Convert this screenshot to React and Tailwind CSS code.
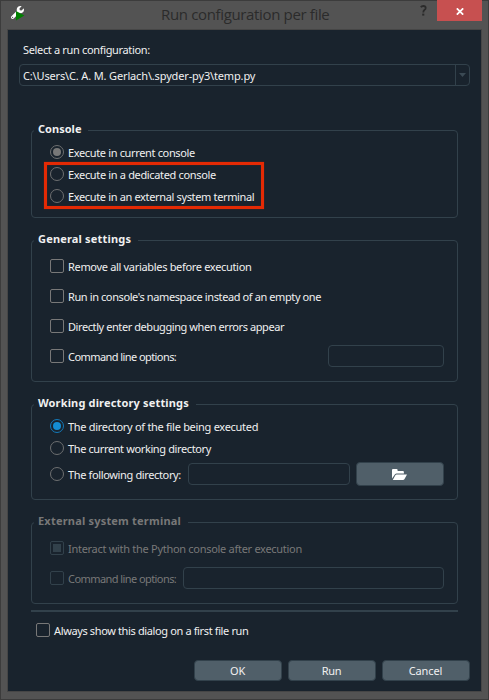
import { FaWrench } from "react-icons/fa";

const FIELD = "h-[22px] rounded border border-[#32414b]";

function Radio({ tone = "border-[#6d6f70]", dot }) {
  return (
    <span className={`flex size-[14px] shrink-0 items-center justify-center rounded-full border ${tone}`}>
      {dot && <span className={`size-2 rounded-full ${dot}`} />}
    </span>
  );
}

function Check({ tone = "border-[#787878]", filled }) {
  return (
    <span className={`flex size-[14px] shrink-0 items-center justify-center rounded-[2px] border ${tone}`}>
      {filled && <span className="size-2 bg-[#32414b]" />}
    </span>
  );
}

function Row({ h, control, text, spacing, children }) {
  return (
    <div className={`flex items-center ${h}`}>
      {control}
      <span className={`relative top-px ml-1 whitespace-nowrap ${spacing}`}>{text}</span>
      {children}
    </div>
  );
}

function Group({ title, spacing, className, children }) {
  return (
    <fieldset className={`w-[427px] rounded-[4px] border border-[#32414b] pr-[13px] pl-[18px] ${className}`}>
      <legend className={`-ml-4 h-[15px] pr-[7px] pl-1 leading-[12px] font-bold ${spacing}`}>{title}</legend>
      <div className="pt-[3px]">{children}</div>
    </fieldset>
  );
}

function Button({ spacing, children }) {
  return (
    <button className={`h-[21px] w-[88px] rounded border border-[#32414b] bg-[#505f69] pr-px leading-[19px] ${spacing}`}>
      {children}
    </button>
  );
}

export default function App() {
  return (
    <div className="flex h-[700px] w-[489px] flex-col border border-[#3c3c3c] bg-[#535353] font-['Noto_Sans',sans-serif] text-[11px] leading-[14px] text-[#f0f0f0]">
      <header className="flex h-[28px] items-start">
        <span className="relative mt-[5px] ml-[10px] h-[15px] w-[14px] shrink-0">
          <FaWrench className="size-[13px] text-white" />
          <svg className="absolute top-[5px] left-[5px]" width="9" height="10" viewBox="0 0 9 10">
            <path d="M0 0 8.4 4.6 0 9.4z" fill="#008000" />
          </svg>
        </span>
        <span className="mt-[3px] ml-[136px] text-[15px] leading-5 tracking-[-0.35px] whitespace-nowrap text-[#2b2b2b] font-['Open_Sans',sans-serif]">
          Run configuration per file
        </span>
        <svg className="mt-[4px] ml-auto" width="7" height="11" viewBox="0 0 7 11">
          <path d="M.8 2.2Q1.6 1 3.3 1 5.7 1 5.7 3 5.7 4.2 4.4 5 3.3 5.8 3.3 7.4" stroke="#2b2b2b" strokeWidth="1.8" fill="none" />
          <path d="M2.2 8.6h2.1v2H2.2z" fill="#2b2b2b" />
        </svg>
        <span className="-mt-px mr-[6px] ml-[10px] flex h-[21px] w-[45px] items-center justify-center bg-[#c75050]">
          <svg className="mt-px" width="8" height="7" viewBox="0 0 8 7">
            <path d="M.8.3 7.2 6.7M7.2.3.8 6.7" stroke="#fff" strokeWidth="1.7" />
          </svg>
        </span>
      </header>

      <main className="mx-[6px] flex h-[663px] flex-col border border-[#464646] bg-[#19232d]">
        <span className="mt-[13px] ml-[15px] tracking-[-0.34px]">Select a run configuration:</span>
        <div className={`mt-[7px] ml-[11px] flex w-[451px] ${FIELD}`}>
          <span className="relative top-px ml-[3px] flex-1 leading-5 tracking-[-0.15px]">
            {"C:\\Users\\C. A. M. Gerlach\\.spyder-py3\\temp.py"}
          </span>
          <span className="flex w-[14px] items-center justify-center border-l border-[#32414b]">
            <svg width="7" height="4" viewBox="0 0 7 4">
              <path d="M0 0h7L3.5 4z" fill="#3b4a54" />
            </svg>
          </span>
        </div>

        <div className="mt-[37px] ml-[23px] flex flex-col">
          <Group title="Console" spacing="tracking-[0.02px]" className="relative h-[95px]">
            <Row h="h-[22px]" control={<Radio dot="bg-[#787878]" />} text="Execute in current console" spacing="tracking-[-0.35px]" />
            <Row h="h-[22px]" control={<Radio />} text="Execute in a dedicated console" spacing="tracking-[-0.34px]" />
            <Row h="h-[22px]" control={<Radio />} text="Execute in an external system terminal" spacing="tracking-[-0.35px]" />
            <div className="absolute top-[24px] left-[12px] h-[47px] w-[220px] border-[3px] border-[#e42a04] shadow-[0_0_1px_#8a2614,inset_0_0_1px_#8a2614]" />
          </Group>

          <Group title="General settings" spacing="tracking-[0.18px]" className="mt-[15px] h-[149px]">
            <Row h="h-[30px]" control={<Check />} text="Remove all variables before execution" spacing="tracking-[-0.32px]" />
            <Row h="h-[30px]" control={<Check />} text="Run in console's namespace instead of an empty one" spacing="tracking-[-0.4px]" />
            <Row h="h-[30px]" control={<Check />} text="Directly enter debugging when errors appear" spacing="tracking-[-0.42px]" />
            <Row h="h-[30px]" control={<Check />} text="Command line options:" spacing="tracking-[-0.57px]">
              <span className={`ml-auto w-[116px] ${FIELD}`} />
            </Row>
          </Group>

          <Group title="Working directory settings" spacing="tracking-[0.16px]" className="mt-[15px] h-[103px]">
            <Row h="h-[22px]" control={<Radio tone="border-[#1479b8]" dot="bg-[#148cd2]" />} text="The directory of the file being executed" spacing="tracking-[-0.29px]" />
            <Row h="h-[22px]" control={<Radio />} text="The current working directory" spacing="tracking-[-0.38px]" />
            <Row h="h-[30px]" control={<Radio />} text="The following directory:" spacing="tracking-[-0.36px]">
              <span className={`ml-auto w-[162px] ${FIELD}`} />
              <span className="ml-[6px] flex h-6 w-[88px] items-center justify-center rounded border border-[#32414b] bg-[#505f69] pr-px">
                <svg width="15" height="11" viewBox="0 0 15 11">
                  <path d="M0 9.6V1Q0 0 1 0h3.6q1 0 1 1v.9h5.3q1 0 1 1v1.5H4.6q-1 0-1.6.8z" fill="#fff" />
                  <path d="M4.6 5.4H15l-2.6 4.8q-.4.8-1.4.8H.8l2.7-5q.3-.6 1.1-.6z" fill="#fff" />
                </svg>
              </span>
            </Row>
          </Group>

          <Group title="External system terminal" spacing="tracking-[0.2px]" className="mt-[15px] h-[89px] text-[#787878]">
            <Row h="h-[30px]" control={<Check tone="border-[#32414b]" filled />} text="Interact with the Python console after execution" spacing="tracking-[-0.29px]" />
            <Row h="h-[30px]" control={<Check tone="border-[#32414b]" />} text="Command line options:" spacing="tracking-[-0.57px]">
              <span className={`ml-auto w-[261px] ${FIELD}`} />
            </Row>
          </Group>
          <div className="mt-[6px] h-[2px] w-[427px] bg-[#32414b]" />
        </div>

        <div className="mt-[9px] ml-[28px]">
          <Row h="h-[18px]" control={<Check />} text="Always show this dialog on a first file run" spacing="tracking-[-0.37px]" />
        </div>

        <footer className="mt-[21px] mr-[11px] flex justify-end gap-[6px]">
          <Button spacing="tracking-[-0.3px]">OK</Button>
          <Button spacing="tracking-[-0.3px]">Run</Button>
          <Button spacing="tracking-[-0.1px]">Cancel</Button>
        </footer>
      </main>
    </div>
  );
}
